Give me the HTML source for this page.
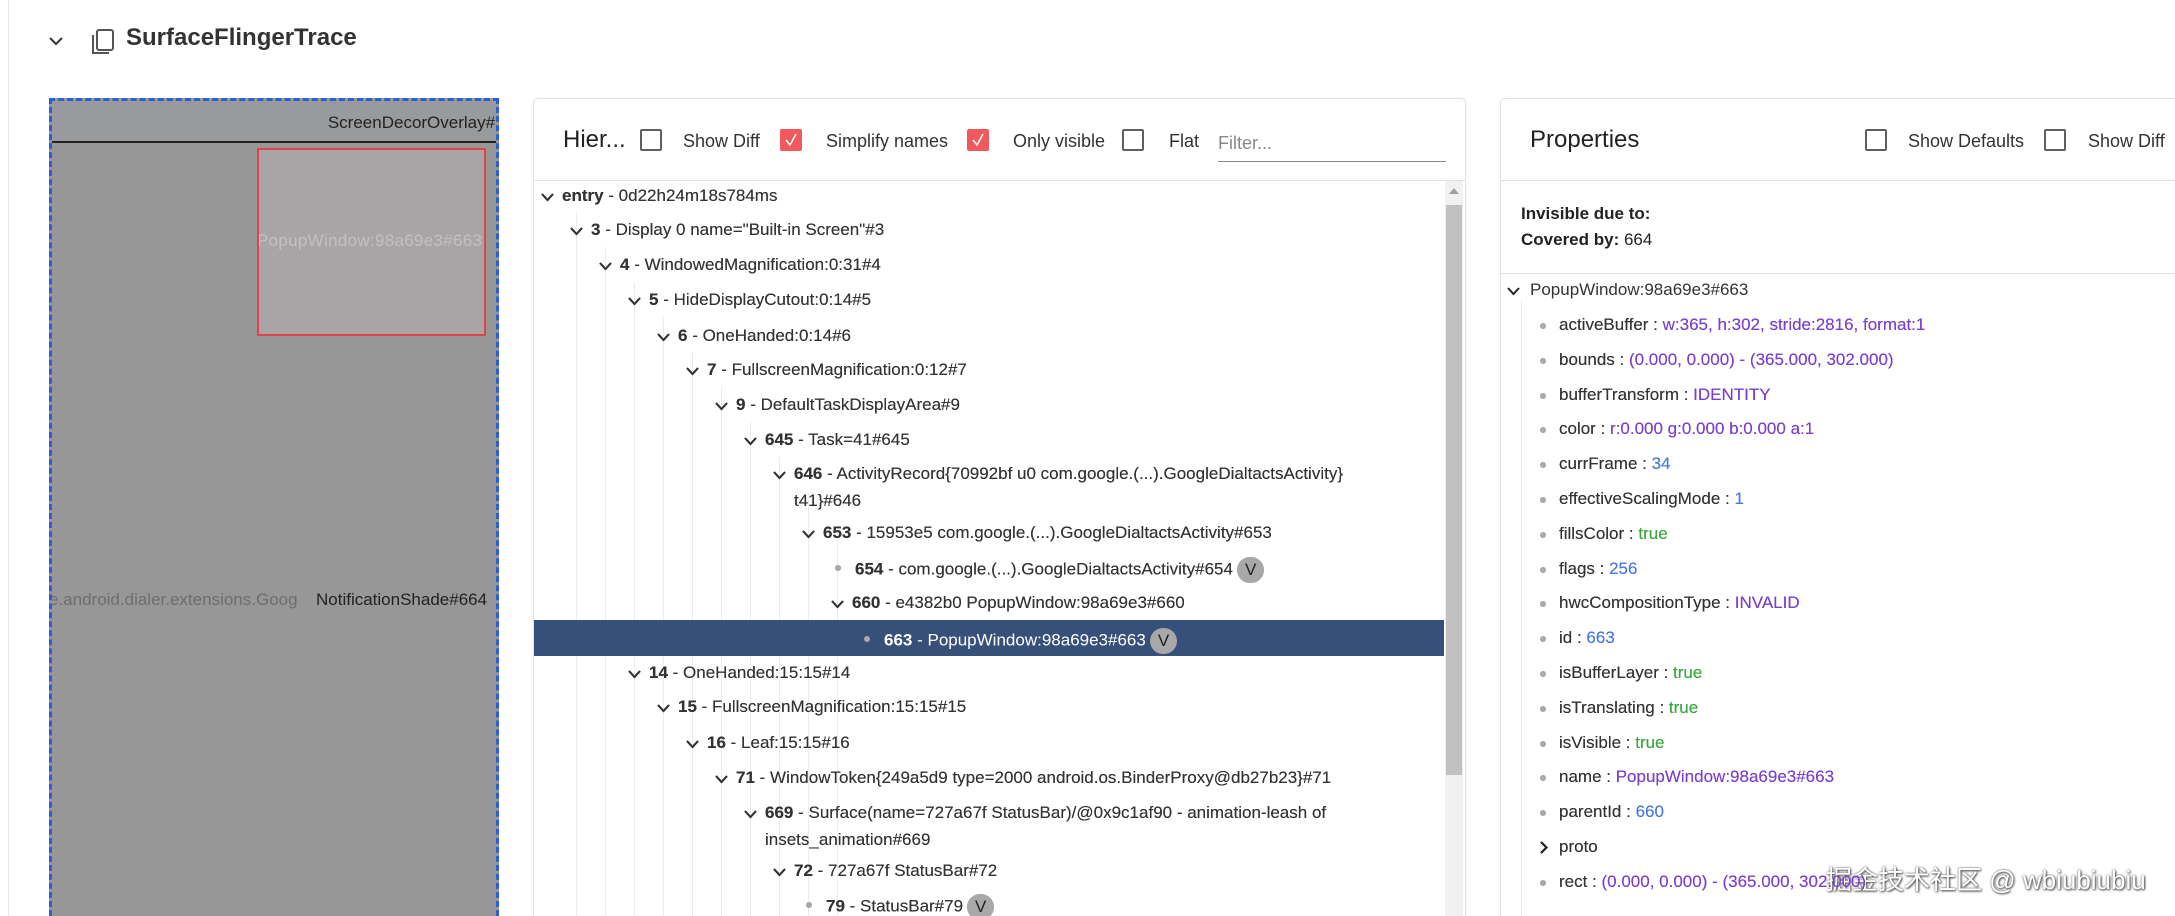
<!DOCTYPE html>
<html style="overflow:hidden;height:916px"><head><meta charset="utf-8"><style>
*{box-sizing:border-box;margin:0;padding:0}
body{width:2175px;height:916px;overflow:hidden;background:#fff;font-family:"Liberation Sans","Noto Sans CJK SC",sans-serif;color:#333;position:relative}
.a{position:absolute;white-space:nowrap}
.panel{position:absolute;border:1px solid #e3e3e3;border-bottom:none;border-radius:5px 5px 0 0;background:#fff;box-shadow:0 1px 3px rgba(0,0,0,.08);overflow:hidden}
.cb{position:absolute;width:22px;height:22px;border:2px solid #5f5f5f;border-radius:2px}
.cbr{position:absolute;width:22px;height:22px;background:#f05a5f;border-radius:2px}
.lbl{position:absolute;font-size:18px;color:#333;white-space:nowrap}
.row{position:absolute;font-size:17px;color:#333;white-space:nowrap;line-height:20px}
.row b{font-weight:bold;color:#222}
.dot{position:absolute;width:6px;height:6px;border-radius:3px;background:#999}
.badge{display:inline-block;background:#a8a8a8;color:#222;border-radius:13px;padding:0 8px;height:26px;line-height:26px;margin-left:4px;vertical-align:middle;font-size:17px}
.guide{position:absolute;width:1px;background:#ececec}
.p{color:#7b3fd0}.n{color:#4a78e0}.g{color:#38a83c}
#clip{position:absolute;left:0;top:0;width:2175px;height:916px;overflow:hidden}
</style></head><body><div id="clip">
<div class="a" style="left:8px;top:0;width:1px;height:916px;background:#e6e6e6"></div>
<svg class="a" style="left:49px;top:37px" width="14" height="9" viewBox="0 0 14 9"><polyline points="1,1 7,7 13,1" fill="none" stroke="#333" stroke-width="2"/></svg>
<svg class="a" style="left:90px;top:28px" width="26" height="28" viewBox="0 0 26 28"><rect x="7" y="2" width="16" height="20" rx="2" fill="none" stroke="#555" stroke-width="2"/><path d="M3 7 V25 H19" fill="none" stroke="#555" stroke-width="2"/></svg>
<div class="a" style="left:126px;top:24px;font-size:24px;font-weight:bold;color:#333">SurfaceFlingerTrace</div>

<div class="a" style="left:49px;top:98px;width:450px;height:818px;background:#979798;overflow:hidden;border:3px dashed #2a5fd6;border-bottom:none">
  <div class="a" style="left:0;top:0;width:450px;height:42px;background:#999a9c;border-bottom:2px solid #222"></div>
  <div class="a" style="right:-18px;top:12px;font-size:17px;color:#222">ScreenDecorOverlay#64</div>
  <div class="a" style="left:205px;top:47px;width:229px;height:188px;background:#a9a5a6;border:2px solid #e0434a;overflow:hidden">
    <div class="a" style="left:-2px;top:81px;font-size:17px;color:#c4c0c1;letter-spacing:0.3px">PopupWindow:98a69e3#663</div>
  </div>
  <div class="a" style="left:-3px;top:489px;font-size:17px;color:#6e6e6e">e.android.dialer.extensions.Goog</div>
  <div class="a" style="left:264px;top:489px;font-size:17px;color:#222">NotificationShade#664</div>
</div>

<div class="panel" style="left:533px;top:98px;width:933px;height:818px">
  <div class="a" style="left:0;top:81px;width:933px;height:1px;background:#e3e3e3"></div>
  <div class="a" style="left:29px;top:27px;font-size:24px;color:#222">Hier...</div>
  <div class="cb" style="left:106px;top:30px"></div><div class="lbl" style="left:149px;top:32px">Show Diff</div>
  <div class="cbr" style="left:246px;top:30px"><svg width="22" height="22"><polyline points="6,11 10,16 16,5" fill="none" stroke="#fff" stroke-width="1.5"/></svg></div><div class="lbl" style="left:292px;top:32px">Simplify names</div>
  <div class="cbr" style="left:433px;top:30px"><svg width="22" height="22"><polyline points="6,11 10,16 16,5" fill="none" stroke="#fff" stroke-width="1.5"/></svg></div><div class="lbl" style="left:479px;top:32px">Only visible</div>
  <div class="cb" style="left:588px;top:30px"></div><div class="lbl" style="left:635px;top:32px">Flat</div>
  <div class="lbl" style="left:684px;top:34px;color:#888">Filter...</div>
  <div class="a" style="left:684px;top:62px;width:228px;height:1px;background:#888"></div>
  <div class="a" style="left:911px;top:82px;width:18px;height:750px;background:#f1f1f1"></div>
  <div class="a" style="left:915px;top:89px;width:0;height:0;border-left:5px solid transparent;border-right:5px solid transparent;border-bottom:6px solid #a0a0a0"></div>
  <div class="a" style="left:912px;top:106px;width:16px;height:570px;background:#c1c1c1"></div>
</div>

<div id="tree"></div>

<div class="panel" style="left:1500px;top:98px;width:700px;height:818px">
  <div class="a" style="left:0;top:81px;width:700px;height:1px;background:#e3e3e3"></div>
  <div class="a" style="left:0;top:174px;width:700px;height:1px;background:#e3e3e3"></div>
  <div class="a" style="left:29px;top:27px;font-size:24px;color:#222">Properties</div>
  <div class="cb" style="left:364px;top:30px"></div><div class="lbl" style="left:407px;top:32px">Show Defaults</div>
  <div class="cb" style="left:543px;top:30px"></div><div class="lbl" style="left:587px;top:32px">Show Diff</div>
  <div class="a" style="left:20px;top:105px;font-size:17px;font-weight:bold;color:#222">Invisible due to:</div>
  <div class="a" style="left:20px;top:131px;font-size:17px;color:#222"><b>Covered by:</b> 664</div>
  <div class="a" style="left:20px;top:201px;width:1px;height:640px;background:#ececec"></div>
</div>
<svg class="a" style="left:1507px;top:287px" width="13" height="9"><polyline points="1,1 6.5,7 12,1" fill="none" stroke="#222" stroke-width="2"/></svg>
<div class="row" style="left:1530px;top:280px">PopupWindow:98a69e3#663</div>
<div id="props"></div>

<div class="a" style="left:1826px;top:860px;font-size:26px;color:#fff;text-shadow:0 0 2px #555,1px 1px 2px #444">掘金技术社区 @ wbiubiubiu</div>
</div>
<script>
var T=[[196,0,'entry','0d22h24m18s784ms','c'],[230,1,'3','Display 0 name="Built-in Screen"#3','c'],[265,2,'4','WindowedMagnification:0:31#4','c'],[300,3,'5','HideDisplayCutout:0:14#5','c'],[336,4,'6','OneHanded:0:14#6','c'],[370,5,'7','FullscreenMagnification:0:12#7','c'],[405,6,'9','DefaultTaskDisplayArea#9','c'],[440,7,'645','Task=41#645','c'],[474,8,'646','ActivityRecord{70992bf u0 com.google.(...).GoogleDialtactsActivity}','c','t41}#646'],[533,9,'653','15953e5 com.google.(...).GoogleDialtactsActivity#653','c'],[567,10,'654','com.google.(...).GoogleDialtactsActivity#654','d',null,1],[603,10,'660','e4382b0 PopupWindow:98a69e3#660','c'],[638,11,'663','PopupWindow:98a69e3#663','d',null,1,1],[673,3,'14','OneHanded:15:15#14','c'],[707,4,'15','FullscreenMagnification:15:15#15','c'],[743,5,'16','Leaf:15:15#16','c'],[778,6,'71','WindowToken{249a5d9 type=2000 android.os.BinderProxy@db27b23}#71','c'],[813,7,'669','Surface(name=727a67f StatusBar)/@0x9c1af90 - animation-leash of','c','insets_animation#669'],[871,8,'72','727a67f StatusBar#72','c'],[904,9,'79','StatusBar#79','d',null,1]];
var h='';
for(var i=1;i<=10;i++){h+='<div class="guide" style="left:'+(547+29*i)+'px;top:'+(212+35*(i-1))+'px;height:'+(916-212-35*(i-1))+'px"></div>';}
h+='<div class="a" style="left:534px;top:620px;width:910px;height:36px;background:#36507a"></div>';
T.forEach(function(r){var y=r[0],x=541+29*r[1],w=r[7]?'#fff':'#333';
 if(r[4]=='c')h+='<svg class="a" style="left:'+x+'px;top:'+(y-3)+'px" width="13" height="9"><polyline points="1,1 6.5,7 12,1" fill="none" stroke="'+w+'" stroke-width="2"/></svg>';
 else h+='<div class="dot" style="left:'+(x+4)+'px;top:'+(y-2)+'px;background:#aaa"></div>';
 var tx=x+(r[4]=='c'?21:24);
 h+='<div class="row" style="left:'+tx+'px;top:'+(y-10)+'px;color:'+w+'"><b style="color:'+w+'">'+r[2]+'</b> - '+r[3].replace(/</g,'&lt;')+(r[6]?'<span class="badge">V</span>':'')+'</div>';
 if(r[5])h+='<div class="row" style="left:'+tx+'px;top:'+(y+17)+'px">'+r[5]+'</div>';
});
document.getElementById('tree').innerHTML=h;
var P=[['activeBuffer','w:365, h:302, stride:2816, format:1','p'],['bounds','(0.000, 0.000) - (365.000, 302.000)','p'],['bufferTransform','IDENTITY','p'],['color','r:0.000 g:0.000 b:0.000 a:1','p'],['currFrame','34','n'],['effectiveScalingMode','1','n'],['fillsColor','true','g'],['flags','256','n'],['hwcCompositionType','INVALID','p'],['id','663','n'],['isBufferLayer','true','g'],['isTranslating','true','g'],['isVisible','true','g'],['name','PopupWindow:98a69e3#663','p'],['parentId','660','n'],['proto',null,''],['rect','(0.000, 0.000) - (365.000, 302.000)','p'],['sourceBounds','(301.000, 74.000) - (636.000, 376.000)','p']];
var q='';
P.forEach(function(p,i){var y=325+34.8*i;if(i==17)y+=12;
 if(p[1]===null){q+='<svg class="a" style="left:1540px;top:'+(y-6)+'px" width="8" height="13"><polyline points="1,1 6.5,6.5 1,12" fill="none" stroke="#222" stroke-width="2"/></svg><div class="row" style="left:1559px;top:'+(y-10)+'px">proto</div>';return;}
 q+='<div class="dot" style="left:1540px;top:'+(y-2)+'px;background:#aaa"></div><div class="row" style="left:1559px;top:'+(y-10)+'px">'+p[0]+' : <span class="'+p[2]+'">'+p[1]+'</span></div>';});
document.getElementById('props').innerHTML=q;
var c=document.getElementById('clip');c.insertAdjacentHTML('beforeend',document.getElementById('tree').outerHTML+document.getElementById('props').outerHTML);
</script>
</body></html>
